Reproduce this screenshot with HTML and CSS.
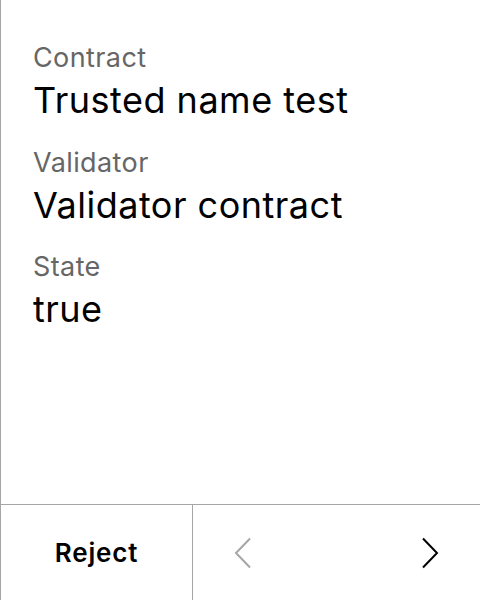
FILE: index.html
```html
<!DOCTYPE html>
<html>
<head>
<meta charset="utf-8">
<link rel="stylesheet" href="styles.css">
</head>
<body>
<div class="screen">
  <div class="content">
    <div class="pair">
      <div class="label">Contract</div>
      <div class="value">Trusted name test</div>
    </div>
    <div class="pair">
      <div class="label">Validator</div>
      <div class="value">Validator contract</div>
    </div>
    <div class="pair">
      <div class="label">State</div>
      <div class="value">true</div>
    </div>
  </div>
  <div class="footer">
    <div class="reject">Reject</div>
    <div class="nav">
      <svg class="chev" width="20" height="32" viewBox="0 0 20 32"><path d="M17 1.5 L3 16 L17 30.5" fill="none" stroke="#a6a6a6" stroke-width="2"/></svg>
      <svg class="chev" width="20" height="32" viewBox="0 0 20 32"><path d="M3 1.5 L17 16 L3 30.5" fill="none" stroke="#000" stroke-width="2"/></svg>
    </div>
  </div>
</div>
</body>
</html>
```

FILE: styles.css
```css
html, body {
  margin: 0;
  padding: 0;
  background: #fff;
}
.screen {
  width: 479px;
  height: 600px;
  border-left: 1px solid #a6a6a6;
  display: flex;
  flex-direction: column;
  font-family: Inter, "Noto Sans", sans-serif;
  color: #000;
}
.content {
  flex: 1;
  padding: 38px 0 0 32px;
  display: flex;
  flex-direction: column;
  gap: 20.5px;
}
.pair {
  display: flex;
  flex-direction: column;
}
.label {
  font-size: 27px;
  line-height: 40px;
  letter-spacing: 0.4px;
  color: #666;
}
.value {
  font-size: 36px;
  line-height: 44px;
  letter-spacing: 0.5px;
  color: #000;
}
.footer {
  height: 95px;
  border-top: 1px solid #a6a6a6;
  display: flex;
}
.reject {
  width: 191px;
  border-right: 1px solid #a6a6a6;
  display: flex;
  align-items: center;
  justify-content: center;
  font-size: 26px;
  font-weight: 600;
  letter-spacing: 0.8px;
}
.nav {
  flex: 1;
  display: flex;
  align-items: center;
  justify-content: space-between;
  padding: 0 40px;
}
```
